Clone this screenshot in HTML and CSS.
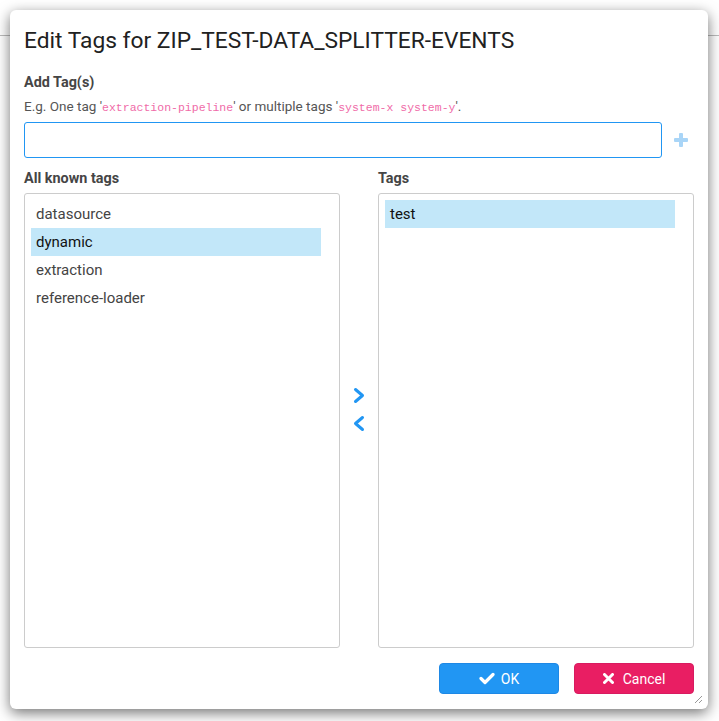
FILE: index.html
```html
<!DOCTYPE html>
<html>
<head>
<meta charset="utf-8">
<link rel="stylesheet" href="styles.css">
</head>
<body>
<div class="topbar"></div>
<div class="dialog">
  <h1 class="title">Edit Tags for ZIP_TEST-DATA_SPLITTER-EVENTS</h1>
  <div class="label">Add Tag(s)</div>
  <div class="hint">E.g. One tag '<code>extraction-pipeline</code>' or multiple tags '<code>system-x system-y</code>'.</div>
  <div class="add-row">
    <div class="input"></div>
    <svg class="plus" width="14" height="14" viewBox="0 0 14 14"><rect x="5" y="0" width="4" height="14" rx="1"/><rect x="0" y="5" width="14" height="4" rx="1"/></svg>
  </div>
  <div class="columns">
    <div class="col">
      <div class="label">All known tags</div>
      <div class="listbox">
        <div class="item">datasource</div>
        <div class="item selected">dynamic</div>
        <div class="item">extraction</div>
        <div class="item">reference-loader</div>
      </div>
    </div>
    <div class="mover">
      <svg width="14" height="17" viewBox="0 0 14 17"><path d="M3.5 2.5 L10.5 8.5 L3.5 14.5" fill="none" stroke="#2196f3" stroke-width="3" stroke-linecap="round" stroke-linejoin="round"/></svg>
      <svg width="14" height="17" viewBox="0 0 14 17"><path d="M10.5 2.5 L3.5 8.5 L10.5 14.5" fill="none" stroke="#2196f3" stroke-width="3" stroke-linecap="round" stroke-linejoin="round"/></svg>
    </div>
    <div class="col">
      <div class="label">Tags</div>
      <div class="listbox">
        <div class="item selected">test</div>
      </div>
    </div>
  </div>
  <div class="footer">
    <button class="btn ok"><svg width="16" height="13" viewBox="0 0 16 13"><path d="M2 6.5 L6 10.5 L14 2.5" fill="none" stroke="#fff" stroke-width="3.2" stroke-linecap="round" stroke-linejoin="round"/></svg>OK</button>
    <button class="btn cancel"><svg width="11" height="11" viewBox="0 0 11 11"><path d="M1.5 1.5 L9.5 9.5 M9.5 1.5 L1.5 9.5" fill="none" stroke="#fff" stroke-width="3" stroke-linecap="round"/></svg>Cancel</button>
  </div>
  <svg class="grip" width="10" height="10" viewBox="0 0 10 10"><path d="M9 2 L2 9 M9 6 L6 9" stroke="#999" stroke-width="1" fill="none"/></svg>
</div>
</body>
</html>
```
FILE: styles.css
```css
html, body {
  margin: 0;
  padding: 0;
  background: #fff;
  font-family: Roboto, "Liberation Sans", sans-serif;
}
.topbar {
  height: 35px;
  border-bottom: 1px solid #bbb;
}
.dialog {
  position: absolute;
  left: 10px;
  top: 10px;
  width: 698px;
  height: 699px;
  box-sizing: border-box;
  padding: 18px 14px 0 14px;
  background: #fff;
  border-radius: 6px;
  box-shadow: 0 4px 14px rgba(0,0,0,0.55);
}
.title {
  margin: 0;
  font-size: 22.75px;
  line-height: 26px;
  font-weight: 400;
  color: #212121;
}
.label {
  font-size: 14.4px;
  line-height: 20px;
  font-weight: 700;
  color: #454545;
}
.dialog > .label {
  margin-top: 19px;
}
.hint {
  margin-top: 4px;
  font-size: 13.5px;
  line-height: 18px;
  color: #555;
}
.hint code {
  font-family: "Liberation Mono", monospace;
  font-size: 11.5px;
  color: #f06ba8;
}
.add-row {
  margin-top: 5px;
  display: flex;
  align-items: center;
}
.input {
  width: 638px;
  height: 36px;
  box-sizing: border-box;
  border: 1px solid #2196f3;
  border-radius: 3px;
}
.plus {
  margin-left: 12px;
  fill: #a9d5f7;
}
.columns {
  margin-top: 11px;
  display: grid;
  grid-template-columns: 316px 38px 316px;
}
.col .label {
  margin-bottom: 4px;
}
.listbox {
  height: 455px;
  box-sizing: border-box;
  border: 1px solid #ccc;
  border-radius: 3px;
  padding: 6px 18px 6px 6px;
}
.item {
  height: 28px;
  line-height: 28px;
  padding-left: 5px;
  font-size: 15px;
  color: #444;
}
.item.selected {
  background: #c2e7f9;
  color: #111;
}
.mover {
  display: flex;
  flex-direction: column;
  align-items: center;
  justify-content: center;
  gap: 11px;
  padding-top: 2px;
}
.footer {
  margin-top: 15px;
  display: flex;
  justify-content: flex-end;
  gap: 15px;
}
.btn {
  width: 120px;
  height: 31px;
  border: 1px solid transparent;
  border-radius: 4px;
  display: flex;
  align-items: center;
  justify-content: center;
  gap: 6px;
  font-family: Roboto, "Liberation Sans", sans-serif;
  font-size: 14px;
  color: #fff;
  padding: 0;
}
.btn.ok {
  background: #2196f3;
  border-color: #1e88e5;
}
.btn.cancel {
  background: #e91e63;
  border-color: #d81b60;
  gap: 9px;
}
.grip {
  position: absolute;
  right: 5px;
  bottom: 5px;
}
```
